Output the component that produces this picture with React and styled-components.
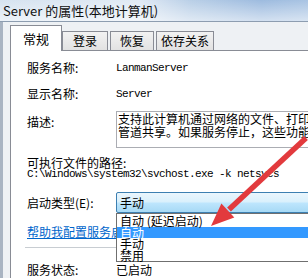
import React from 'react';
import styled, { createGlobalStyle } from 'styled-components';

const GlobalStyle = createGlobalStyle`
  html, body {
    margin: 0;
    padding: 0;
    background: #ffffff;
  }
  body {
    font-family: "Noto Sans CJK SC", "Noto Sans", sans-serif;
    color: #000;
  }
`;

const Window = styled.div`
  position: relative;
  width: 308px;
  height: 278px;
  overflow: hidden;
  display: flex;
  flex-direction: column;
  background: #eef1f4;
`;

const TitleBar = styled.div`
  flex: none;
  height: 21px;
  display: flex;
  align-items: center;
  padding-left: 3px;
  border-bottom: 1px solid #8d9db0;
  background:
    linear-gradient(180deg, rgba(255, 255, 255, 0) 0%, rgba(255, 255, 255, 0.55) 100%),
    linear-gradient(90deg, #d6e3f0 0%, #e1eaf4 45%, #b9cfe7 62%, #9dbbdf 85%, #a9c4e3 100%);
`;

const Title = styled.span`
  font-size: 13px;
  line-height: 1;
  color: #111;
  white-space: nowrap;
`;

const Body = styled.div`
  flex: 1;
  display: flex;
  min-height: 0;
`;

const FrameEdge = styled.div`
  flex: none;
  width: 3px;
  background: #a9b4c2;
`;

const Dialog = styled.div`
  flex: 1;
  min-width: 0;
  display: flex;
  flex-direction: column;
  padding: 3px 0 0 7px;
`;

const TabStrip = styled.div`
  flex: none;
  height: 25px;
  display: flex;
  align-items: flex-end;
`;

const Tab = styled.div`
  box-sizing: border-box;
  flex: none;
  width: ${p => p.$w}px;
  height: ${p => (p.$active ? 26 : 19)}px;
  margin-bottom: ${p => (p.$active ? -1 : 0)}px;
  margin-right: ${p => p.$gap || 0}px;
  border: 1px solid #898c95;
  border-bottom: none;
  display: flex;
  align-items: center;
  justify-content: center;
  font-size: ${p => (p.$active ? 13 : 12)}px;
  line-height: 1;
  white-space: nowrap;
  background: ${p => (p.$active ? '#ffffff' : 'linear-gradient(180deg, #f2f2f2 0%, #e2e2e2 100%)')};
  position: ${p => (p.$active ? 'relative' : 'static')};
  z-index: ${p => (p.$active ? 1 : 'auto')};
`;

const Panel = styled.div`
  flex: 1;
  width: 420px;
  background: #ffffff;
  border-top: 1px solid #898c95;
  border-left: 1px solid #898c95;
  padding: 10px 0 0 16px;
  display: flex;
  flex-direction: column;
`;

const Field = styled.div`
  display: grid;
  grid-template-columns: 89px 300px;
  align-items: ${p => p.$align || 'center'};
  margin-top: ${p => p.$top || 0}px;
`;

const Label = styled.div`
  font-size: 12px;
  line-height: ${p => p.$lh || 14}px;
  margin-top: ${p => p.$top || 0}px;
  white-space: nowrap;
`;

const Mono = styled.div`
  font-family: "Liberation Mono", "DejaVu Sans Mono", monospace;
  font-size: 11px;
  letter-spacing: -0.6px;
  line-height: ${p => p.$lh || 14}px;
  white-space: nowrap;
`;

const Value = styled.div`
  font-size: 12px;
  line-height: 14px;
  white-space: nowrap;
`;

const DescBox = styled.div`
  box-sizing: border-box;
  height: 37px;
  border: 1px solid #abadb3;
  padding-left: 1px;
  font-size: 12px;
  line-height: 13px;
  overflow: hidden;
`;

const DescLine = styled.div`
  white-space: nowrap;
`;

const ComboWrap = styled.div`
  position: relative;
`;

const Combo = styled.div`
  box-sizing: border-box;
  height: 21px;
  border: 1px solid #3c7fb1;
  border-radius: 2px;
  padding-left: 3px;
  display: flex;
  align-items: center;
  font-size: 12px;
  background: linear-gradient(180deg, #eaf6fd 0%, #d9f0fc 48%, #bee6fd 52%, #a7d9f5 100%);
`;

const DropList = styled.div`
  position: absolute;
  top: 100%;
  left: 0;
  width: 300px;
  box-sizing: border-box;
  padding-top: 1px;
  background: #ffffff;
  border: 1px solid #6f6f6f;
  z-index: 2;
`;

const DropItem = styled.div`
  height: 11.5px;
  line-height: 11.5px;
  padding-left: 3px;
  font-size: 12px;
  white-space: nowrap;
  color: ${p => (p.$hot ? '#ffffff' : '#000000')};
  background: ${p => (p.$hot ? '#3399ff' : 'transparent')};
`;

const HelpLink = styled.a`
  margin-top: 12px;
  font-size: 12px;
  line-height: 14px;
  color: #0066cc;
  text-decoration: underline;
  white-space: nowrap;
`;

const Separator = styled.div`
  margin: 8px 0 0 -2px;
  height: 1px;
  background: #c8cdd2;
`;

const Annotation = styled.svg`
  position: absolute;
  left: 0;
  top: 0;
  width: 308px;
  height: 278px;
  pointer-events: none;
  z-index: 5;
`;

const tabs = [
  { label: '常规', w: 52, active: true },
  { label: '登录', w: 46, gap: 2 },
  { label: '恢复', w: 44, gap: 2 },
  { label: '依存关系', w: 58 },
];

const startupOptions = ['自动 (延迟启动)', '自动', '手动', '禁用'];

export default function App() {
  return (
    <>
      <GlobalStyle />
      <Window>
        <TitleBar>
          <Title>Server 的属性(本地计算机)</Title>
        </TitleBar>
        <Body>
          <FrameEdge />
          <Dialog>
            <TabStrip>
              {tabs.map(t => (
                <Tab key={t.label} $w={t.w} $gap={t.gap} $active={t.active}>
                  {t.label}
                </Tab>
              ))}
            </TabStrip>
            <Panel>
              <Field>
                <Label>服务名称:</Label>
                <Mono>LanmanServer</Mono>
              </Field>
              <Field $top={12}>
                <Label>显示名称:</Label>
                <Mono>Server</Mono>
              </Field>
              <Field $top={10} $align="start">
                <Label $top={4}>描述:</Label>
                <DescBox>
                  <DescLine>支持此计算机通过网络的文件、打印和命名</DescLine>
                  <DescLine>管道共享。如果服务停止，这些功能不可用。</DescLine>
                </DescBox>
              </Field>
              <Label $top={8} $lh={13}>可执行文件的路径:</Label>
              <Mono $lh={11}>C:\Windows\system32\svchost.exe -k netsvcs</Mono>
              <Field $top={12}>
                <Label>启动类型(E):</Label>
                <ComboWrap>
                  <Combo>手动</Combo>
                  <DropList>
                    {startupOptions.map(o => (
                      <DropItem key={o} $hot={o === '自动'}>{o}</DropItem>
                    ))}
                  </DropList>
                </ComboWrap>
              </Field>
              <HelpLink href="#">帮助我配置服务启动选项。</HelpLink>
              <Separator />
              <Field $top={15}>
                <Label>服务状态:</Label>
                <Value>已启动</Value>
              </Field>
            </Panel>
          </Dialog>
        </Body>
        <Annotation viewBox="0 0 308 278">
          <line x1="306" y1="138" x2="229" y2="209.5" stroke="#e23a3d" strokeWidth="5.5" />
          <polygon points="211,226 234.3,217.4 221.4,203.4" fill="#e23a3d" />
        </Annotation>
      </Window>
    </>
  );
}
